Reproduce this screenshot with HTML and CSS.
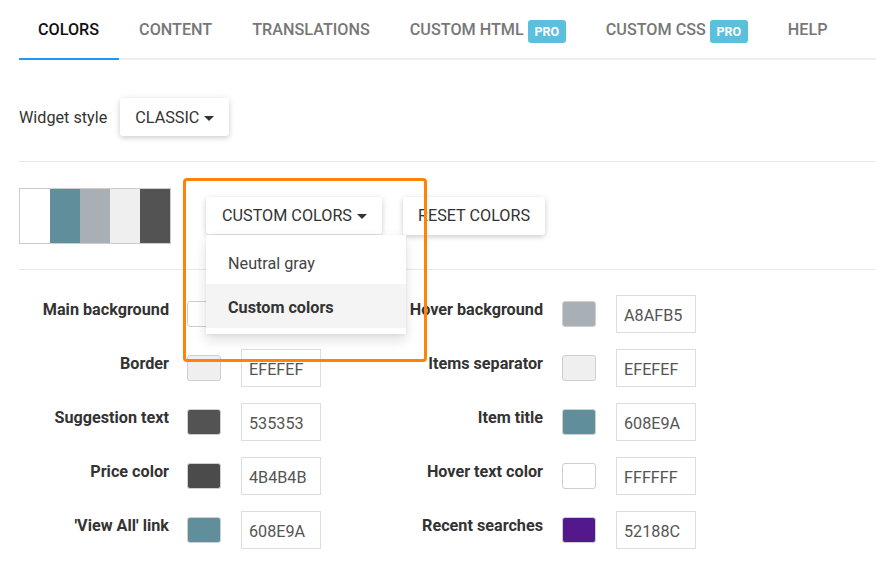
FILE: index.html
```html
<!DOCTYPE html>
<html lang="en">
<head>
<meta charset="utf-8">
<title>Colors</title>
<link rel="stylesheet" href="styles.css">
</head>
<body>
<div class="page">
  <nav class="tabs">
    <a class="tab active">COLORS</a>
    <a class="tab">CONTENT</a>
    <a class="tab">TRANSLATIONS</a>
    <a class="tab">CUSTOM HTML <span class="badge">PRO</span></a>
    <a class="tab">CUSTOM CSS <span class="badge">PRO</span></a>
    <a class="tab">HELP</a>
  </nav>

  <section class="section style-row">
    <span class="row-label">Widget style</span>
    <button class="btn">CLASSIC <span class="caret"></span></button>
  </section>

  <section class="section palette-row">
    <div class="palette">
      <span class="chip c-white"></span>
      <span class="chip c-teal"></span>
      <span class="chip c-gray"></span>
      <span class="chip c-light"></span>
      <span class="chip c-dark"></span>
    </div>
    <div class="dropdown">
      <button class="btn">CUSTOM COLORS <span class="caret"></span></button>
      <ul class="menu">
        <li class="menu-item">Neutral gray</li>
        <li class="menu-item selected">Custom colors</li>
      </ul>
      <div class="highlight"></div>
    </div>
    <button class="btn reset">RESET COLORS</button>
  </section>

  <form class="color-grid">
    <div class="field"><label class="field-label">Main background</label><span class="swatch c-white"></span><input class="hex" value="FFFFFF"></div>
    <div class="field"><label class="field-label">Hover background</label><span class="swatch c-gray"></span><input class="hex" value="A8AFB5"></div>
    <div class="field"><label class="field-label">Border</label><span class="swatch c-light"></span><input class="hex" value="EFEFEF"></div>
    <div class="field"><label class="field-label">Items separator</label><span class="swatch c-light"></span><input class="hex" value="EFEFEF"></div>
    <div class="field"><label class="field-label">Suggestion text</label><span class="swatch c-dark"></span><input class="hex" value="535353"></div>
    <div class="field"><label class="field-label">Item title</label><span class="swatch c-teal"></span><input class="hex" value="608E9A"></div>
    <div class="field"><label class="field-label">Price color</label><span class="swatch c-price"></span><input class="hex" value="4B4B4B"></div>
    <div class="field"><label class="field-label">Hover text color</label><span class="swatch c-white"></span><input class="hex" value="FFFFFF"></div>
    <div class="field"><label class="field-label">'View All' link</label><span class="swatch c-teal"></span><input class="hex" value="608E9A"></div>
    <div class="field"><label class="field-label">Recent searches</label><span class="swatch c-purple"></span><input class="hex" value="52188C"></div>
  </form>
</div>
</body>
</html>
```

FILE: styles.css
```css
* { box-sizing: border-box; }
html, body { margin: 0; padding: 0; background: #fff; }
body {
  font-family: Roboto, "Liberation Sans", Arial, sans-serif;
  font-size: 16.2px;
  color: #333;
  width: 876px;
  height: 586px;
  overflow: hidden;
}
.page { padding-left: 19px; }

/* Tabs */
.tabs {
  display: flex;
  border-bottom: 2px solid #eeeeee;
  height: 60px;
}
.tab {
  display: flex;
  align-items: center;
  padding: 0 20px 0 20px;
  height: 60px;
  margin-bottom: -2px;
  border-bottom: 2px solid transparent;
  font-weight: 500;
  font-size: 16.2px;
  line-height: 20px;
  color: #777;
  white-space: nowrap;
  padding-top: 1px;
}
.tab:first-child { padding-left: 19px; }
.tab.active { color: #111; border-bottom-color: #2196f3; }
.badge {
  display: inline-block;
  margin-left: 4px;
  margin-top: 3px;
  background: #5bc0de;
  color: #fff;
  font-size: 12.5px;
  font-weight: 700;
  line-height: 23px;
  height: 23px;
  width: 38px;
  text-align: center;
  border-radius: 3px;
}

/* Sections */
.section {
  display: flex;
  align-items: center;
  border-bottom: 1px solid #e9e9e9;
}
.style-row { padding: 38px 0 25px; }
.palette-row { padding: 25px 0 25px; height: 108px; }
.row-label { margin-right: 13px; color: #333; padding-top: 1px; }

.btn {
  font-family: inherit;
  font-size: 16.2px;
  color: #333;
  background: #fff;
  border: 0;
  border-radius: 3px;
  height: 38px;
  padding: 0 15px 0 15px;
  display: inline-flex;
  align-items: center;
  box-shadow: 0 2px 5px rgba(0,0,0,0.14), 0 1px 8px rgba(0,0,0,0.08);
}
.caret {
  display: inline-block;
  width: 0; height: 0;
  margin-left: 5px;
  margin-top: 2px;
  border-left: 5px solid transparent;
  border-right: 5px solid transparent;
  border-top: 5px solid #333;
}

/* Palette */
.palette {
  display: flex;
  border: 1px solid #cccccc;
  height: 56px;
  width: 152px;
}
.chip { width: 30px; height: 100%; }
.c-white { background: #ffffff; }
.c-teal { background: #608e9a; }
.c-gray { background: #a8afb5; }
.c-light { background: #efefef; }
.c-dark { background: #535353; }
.c-price { background: #4b4b4b; }
.c-purple { background: #52188c; }

/* Dropdown */
.dropdown { position: relative; margin-left: 35px; }
.dropdown .btn { height: 37px; padding-left: 16px; }
.menu {
  position: absolute;
  left: 0;
  top: 100%;
  margin: 1px 0 0;
  width: 200px;
  padding: 5px 0 6px;
  list-style: none;
  background: #fff;
  box-shadow: 0 6px 12px rgba(0,0,0,0.13), 0 1px 3px rgba(0,0,0,0.06);
  z-index: 5;
}
.menu-item {
  height: 44px;
  line-height: 40px;
  padding: 4px 0 0 22px;
  color: #444;
}
.menu-item.selected { background: #f4f4f4; font-weight: 700; color: #333; }
.highlight {
  position: absolute;
  left: -23px;
  top: -19px;
  width: 244px;
  height: 184px;
  border: 3px solid #ff8307;
  border-radius: 4px;
  z-index: 10;
  pointer-events: none;
}
.reset { margin-left: 21px; height: 38px; }

/* Color grid */
.color-grid {
  display: grid;
  grid-template-columns: 374px 374px;
  row-gap: 16px;
  padding-top: 25px;
  margin: 0;
}
.field { display: flex; align-items: center; height: 38px; }
.field-label {
  width: 150px;
  text-align: right;
  font-weight: 700;
  font-size: 16.2px;
  line-height: 20px;
  align-self: flex-start;
  padding-top: 5px;
  color: #333;
  white-space: nowrap;
}
.swatch {
  margin-left: 19px;
  width: 34px;
  height: 26px;
  border: 1px solid #cfcfcf;
  border-radius: 3px;
}
.hex {
  margin-left: 20px;
  width: 80px;
  height: 38px;
  border: 1px solid #dddddd;
  padding: 2px 0 0 7px;
  font-family: inherit;
  font-size: 16.2px;
  color: #555;
  background: #fff;
}
.field:nth-child(odd) .swatch { margin-left: 18px; }
```
